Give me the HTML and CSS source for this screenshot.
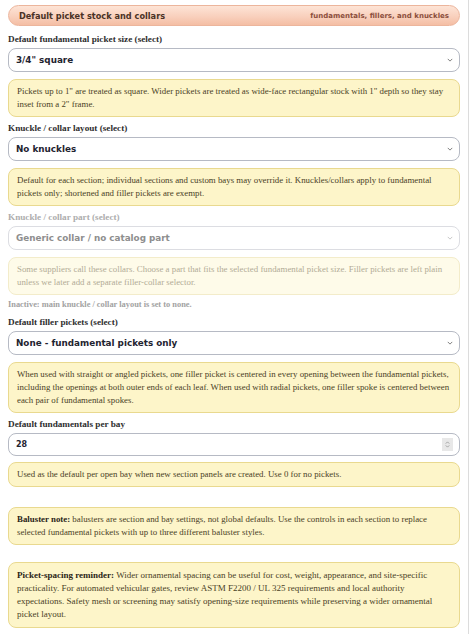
FILE: index.html
```html
<!DOCTYPE html>
<html lang="en">
<head>
    <meta charset="UTF-8">
    <meta name="viewport" content="width=device-width, initial-scale=1.0">
    <title>Picket stock</title>
    <link rel="stylesheet" href="styles.css">
</head>
<body>
    <section class="panel">
        <div class="panel-head">
            <span class="head-title">Default picket stock and collars</span>
            <span class="head-sub">fundamentals, fillers, and knuckles</span>
        </div>

        <div class="group first">
            <label class="label">Default fundamental picket size (select)</label>
            <div class="field">
                <span class="field-value">3/4" square</span>
                <svg class="chev" viewBox="0 0 8 5"><path d="M1 1l3 3 3-3"/></svg>
            </div>
            <p class="note">Pickets up to 1" are treated as square. Wider pickets are treated as wide-face rectangular stock with 1" depth so they stay inset from a 2" frame.</p>
        </div>

        <div class="group">
            <label class="label">Knuckle / collar layout (select)</label>
            <div class="field">
                <span class="field-value">No knuckles</span>
                <svg class="chev" viewBox="0 0 8 5"><path d="M1 1l3 3 3-3"/></svg>
            </div>
            <p class="note">Default for each section; individual sections and custom bays may override it. Knuckles/collars apply to fundamental pickets only; shortened and filler pickets are exempt.</p>
        </div>

        <div class="group disabled">
            <label class="label">Knuckle / collar part (select)</label>
            <div class="field">
                <span class="field-value">Generic collar / no catalog part</span>
                <svg class="chev" viewBox="0 0 8 5"><path d="M1 1l3 3 3-3"/></svg>
            </div>
            <p class="note">Some suppliers call these collars. Choose a part that fits the selected fundamental picket size. Filler pickets are left plain unless we later add a separate filler-collar selector.</p>
            <p class="inactive">Inactive: main knuckle / collar layout is set to none.</p>
        </div>

        <div class="group">
            <label class="label">Default filler pickets (select)</label>
            <div class="field">
                <span class="field-value">None - fundamental pickets only</span>
                <svg class="chev" viewBox="0 0 8 5"><path d="M1 1l3 3 3-3"/></svg>
            </div>
            <p class="note">When used with straight or angled pickets, one filler picket is centered in every opening between the fundamental pickets, including the openings at both outer ends of each leaf. When used with radial pickets, one filler spoke is centered between each pair of fundamental spokes.</p>
        </div>

        <div class="group">
            <label class="label">Default fundamentals per bay</label>
            <div class="field number">
                <span class="field-value">28</span>
                <span class="spin">
                    <svg viewBox="0 0 8 12"><path d="M2 5l2-2 2 2M2 7l2 2 2-2"/></svg>
                </span>
            </div>
            <p class="note short">Used as the default per open bay when new section panels are created. Use 0 for no pickets.</p>
        </div>

        <p class="note callout"><b>Baluster note:</b> balusters are section and bay settings, not global defaults. Use the controls in each section to replace selected fundamental pickets with up to three different baluster styles.</p>

        <p class="note callout reminder"><b>Picket-spacing reminder:</b> Wider ornamental spacing can be useful for cost, weight, appearance, and site-specific practicality. For automated vehicular gates, review ASTM F2200 / UL 325 requirements and local authority expectations. Safety mesh or screening may satisfy opening-size requirements while preserving a wider ornamental picket layout.</p>
    </section>
</body>
</html>
```
FILE: styles.css
```css
body {
    margin: 0;
    background: #fff;
    font-family: "Liberation Serif", serif;
    color: #2b2b2b;
}

.panel {
    width: 452px;
    padding: 5px 8px 8px 8px;
    border-right: 1px solid #dcdcdc;
    min-height: 621px;
}

.panel-head {
    display: flex;
    justify-content: space-between;
    align-items: center;
    height: 19px;
    padding: 0 10px;
    border: 1px solid #ecb59c;
    border-radius: 11px;
    background: linear-gradient(180deg, #fde4d6 0%, #f9d0bd 55%, #f4bea4 100%);
}

.head-title {
    font-family: "DejaVu Sans", sans-serif;
    font-weight: bold;
    font-size: 8.2px;
    color: #4a3226;
}

.head-sub {
    font-family: "DejaVu Sans", sans-serif;
    font-weight: bold;
    font-size: 7px;
    color: #8c4e3c;
}

.group {
    margin-top: 5px;
}

.group.first {
    margin-top: 7px;
}

.label {
    display: block;
    font-weight: bold;
    font-size: 9.2px;
    line-height: 13px;
    margin-bottom: 2px;
    color: #2e2e2e;
}

.field {
    display: flex;
    align-items: center;
    justify-content: space-between;
    height: 22px;
    padding: 0 6px 0 7px;
    border: 1px solid #b6bac4;
    border-radius: 8px;
    background: #fff;
}

.field-value {
    font-family: "DejaVu Sans", sans-serif;
    font-weight: bold;
    font-size: 8.8px;
    color: #1f2430;
}

.chev {
    width: 6px;
    height: 4px;
    fill: none;
    stroke: #555;
    stroke-width: 1;
}

.number {
    height: 21px;
}

.number .field-value {
    font-size: 8px;
}

.spin {
    display: flex;
    align-items: center;
    justify-content: center;
    width: 11px;
    height: 13px;
    background: #e8e8e8;
}

.spin svg {
    width: 7px;
    height: 11px;
    fill: none;
    stroke: #888;
    stroke-width: 0.8;
}

.note {
    margin: 7px 0 0 0;
    padding: 5px 8px;
    background: #fdf5c9;
    border: 1px solid #e9d98f;
    border-radius: 8px;
    font-size: 8.85px;
    line-height: 13px;
    color: #4a3f26;
}

.note.short {
    margin-top: 6px;
}

.callout {
    margin-top: 20px;
}

.callout.reminder {
    margin-top: 17px;
    padding: 6px 8px;
    font-size: 9px;
}

.callout b {
    color: #2b2417;
}

.disabled .label {
    color: #adadad;
}

.disabled .field {
    border-color: #dcdde2;
}

.disabled .field-value {
    color: #8e8e8e;
}

.disabled .chev {
    stroke: #b4b4b4;
}

.disabled .note {
    background: #fefbe9;
    border-color: #f3ecca;
    color: #b2ab96;
}

.inactive {
    margin: 4px 0 0 0;
    font-size: 8.4px;
    line-height: 12px;
    font-weight: bold;
    color: #a2a2a2;
}
```
